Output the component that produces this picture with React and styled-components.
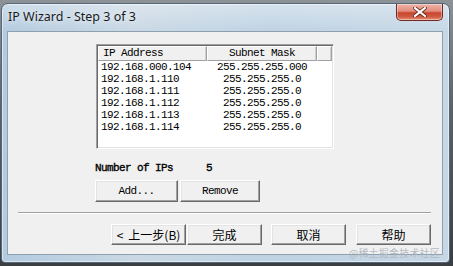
import React from "react";
import styled, { createGlobalStyle } from "styled-components";

const Global = createGlobalStyle`
  html, body { margin: 0; padding: 0; }
  body {
    width: 453px; height: 266px; overflow: hidden;
    background: linear-gradient(180deg, #8d9296 0%, #5d6266 40%, #3b3e41 100%);
  }
`;

const Window = styled.div`
  position: relative;
  box-sizing: border-box;
  margin: 3px 0 0 1px;
  width: 449px;
  height: 260px;
  border: 1px solid #55677a;
  border-radius: 7px 7px 4px 4px;
  background:
    linear-gradient(180deg, rgba(255,255,255,0.35) 0px, rgba(255,255,255,0) 28px),
    linear-gradient(90deg, #b3cbe0 0%, #c9d8e4 30%, #bfd3e3 60%, #c6d7e5 100%);
  box-shadow: inset 0 0 0 1px rgba(255,255,255,0.5);
  display: flex;
  flex-direction: column;
  padding: 0 6px 7px 5px;
`;

const TitleBar = styled.div`
  height: 27px;
  display: flex;
  align-items: flex-start;
`;

const Title = styled.div`
  font-family: "Noto Sans", "Open Sans", sans-serif;
  font-size: 12.5px;
  color: #1b1b1b;
  padding: 4px 0 0 1px;
  line-height: 17px;
  text-shadow: 0 0 6px rgba(255,255,255,0.9);
`;

const CloseButton = styled.div`
  margin-left: auto;
  width: 47px;
  height: 17px;
  box-sizing: border-box;
  border: 1px solid #6e2a22;
  border-top: none;
  border-radius: 0 0 5px 5px;
  background: linear-gradient(180deg, #efb3a6 0%, #e08c7c 45%, #c9442d 55%, #d05a42 80%, #e69478 100%);
  box-shadow: inset 0 0 0 1px rgba(255,255,255,0.4);
  display: flex;
  align-items: center;
  justify-content: center;
`;

const Client = styled.div`
  flex: 1;
  border: 1px solid #8e9fae;
  background: #f0f0f0;
  display: flex;
  flex-direction: column;
`;

const Upper = styled.div`
  padding: 12px 0 0 88px;
  display: flex;
  flex-direction: column;
`;

const ListBox = styled.div`
  box-sizing: border-box;
  width: 238px;
  height: 105px;
  background: #fff;
  border-style: solid;
  border-width: 1px;
  border-color: #a0a0a0 #ffffff #ffffff #a0a0a0;
  box-shadow: inset 1px 1px 0 #696969, inset -1px -1px 0 #e3e3e3;
  padding: 1px;
  display: flex;
  flex-direction: column;
`;

const mono = `"Liberation Mono", "DejaVu Sans Mono", monospace`;

const HeaderRow = styled.div`
  display: grid;
  grid-template-columns: 109px 110px 15px;
  height: 15px;
`;

const HeaderCell = styled.div`
  box-sizing: border-box;
  background: #f0f0f0;
  border-style: solid;
  border-width: 1px;
  border-color: #ffffff #a0a0a0 #a0a0a0 #ffffff;
  box-shadow: inset -1px 0 0 #d0d0d0;
  font-family: ${mono};
  font-size: 11px;
  letter-spacing: -0.6px;
  color: #000;
  line-height: 13px;
  text-align: ${(p) => p.$align || "left"};
  padding-left: ${(p) => (p.$align === "center" ? 0 : 4)}px;
  white-space: nowrap;
  overflow: hidden;
`;

const Row = styled.div`
  display: grid;
  grid-template-columns: 109px 110px;
  height: 12px;
  font-family: ${mono};
  font-size: 11px;
  letter-spacing: -0.6px;
  line-height: 12px;
  color: #000;
`;

const Cell = styled.div`
  text-align: ${(p) => p.$align || "left"};
  padding-left: ${(p) => (p.$align === "center" ? 0 : 3)}px;
  white-space: nowrap;
`;

const CountRow = styled.div`
  margin: 13px 0 0 -1px;
  display: flex;
  height: 12px;
  line-height: 12px;
  font-family: ${mono};
  font-size: 11px;
  letter-spacing: -0.6px;
  -webkit-text-stroke: 0.35px #000;
  color: #000;
`;

const CountLabel = styled.div`
  width: 111px;
`;

const ButtonRow = styled.div`
  display: flex;
  gap: ${(p) => p.$gap || 2}px;
  margin: ${(p) => p.$margin || "0"};
`;

const Button = styled.button`
  box-sizing: border-box;
  width: ${(p) => p.$w || 75}px;
  height: ${(p) => p.$h || 21}px;
  margin: 0;
  margin-left: ${(p) => p.$ml || 0}px;
  padding: 0;
  background: #f0f0f0;
  border-style: solid;
  border-width: 1px;
  border-color: #ffffff #696969 #696969 #ffffff;
  box-shadow: inset -1px -1px 0 #a0a0a0, inset 1px 1px 0 #e3e3e3;
  font-family: ${(p) => (p.$cjk ? `"Noto Sans CJK SC", "Noto Sans", sans-serif` : mono)};
  font-size: ${(p) => (p.$cjk ? 12 : 11)}px;
  letter-spacing: ${(p) => (p.$cjk ? 0 : -0.6)}px;
  color: #000;
  line-height: 1;
  display: flex;
  align-items: center;
  justify-content: center;
`;

const Arrow = styled.span`
  margin-right: 5px;
`;

const Separator = styled.div`
  margin: 10px 0 0 10px;
  width: 413px;
  height: 1px;
  background: #a0a0a0;
  border-bottom: 1px solid #ffffff;
`;

const Watermark = styled.div`
  position: absolute;
  right: 9px;
  bottom: 2px;
  font-family: "Noto Sans CJK SC", sans-serif;
  font-size: 10px;
  color: rgba(175, 182, 190, 0.95);
  letter-spacing: 0.2px;
`;

const rows = [
  ["192.168.000.104", "255.255.255.000"],
  ["192.168.1.110", "255.255.255.0"],
  ["192.168.1.111", "255.255.255.0"],
  ["192.168.1.112", "255.255.255.0"],
  ["192.168.1.113", "255.255.255.0"],
  ["192.168.1.114", "255.255.255.0"],
];

export default function App() {
  return (
    <>
      <Global />
      <Window>
        <TitleBar>
          <Title>IP Wizard - Step 3 of 3</Title>
          <CloseButton>
            <svg width="14" height="10" viewBox="0 0 14 10">
              <path d="M2 1 L12 9 M12 1 L2 9" stroke="#5a1a12" strokeWidth="3.6" strokeLinecap="square" />
              <path d="M2 1 L12 9 M12 1 L2 9" stroke="#ffffff" strokeWidth="2.2" strokeLinecap="square" />
            </svg>
          </CloseButton>
        </TitleBar>
        <Client>
          <Upper>
            <ListBox>
              <HeaderRow>
                <HeaderCell>IP Address</HeaderCell>
                <HeaderCell $align="center">Subnet Mask</HeaderCell>
                <HeaderCell />
              </HeaderRow>
              {rows.map(([ip, mask]) => (
                <Row key={ip}>
                  <Cell>{ip}</Cell>
                  <Cell $align="center">{mask}</Cell>
                </Row>
              ))}
            </ListBox>
            <CountRow>
              <CountLabel>Number of IPs</CountLabel>
              <div>5</div>
            </CountRow>
            <ButtonRow $margin="6px 0 0 -1px" $gap={2}>
              <Button $w={83} $h={22}>Add...</Button>
              <Button $w={80} $h={22}>Remove</Button>
            </ButtonRow>
          </Upper>
          <Separator />
          <ButtonRow $margin="10px 0 0 103px" $gap={1}>
            <Button $cjk><Arrow>&lt;</Arrow>上一步(B)</Button>
            <Button $cjk>完成</Button>
            <Button $cjk $ml={8}>取消</Button>
            <Button $cjk $ml={9}>帮助</Button>
          </ButtonRow>
        </Client>
        <Watermark>@稀土掘金技术社区</Watermark>
      </Window>
    </>
  );
}
